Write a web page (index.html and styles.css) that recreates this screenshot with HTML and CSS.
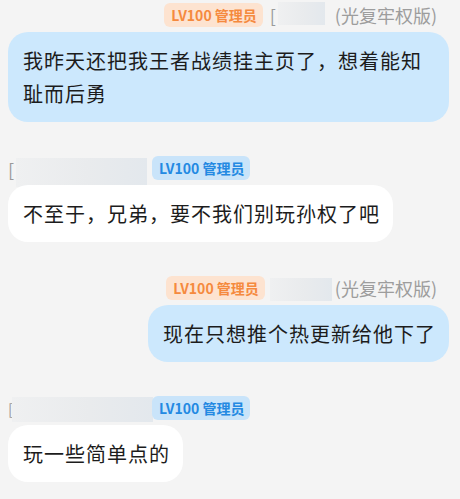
FILE: index.html
```html
<!DOCTYPE html>
<html lang="zh-CN">
<head>
<meta charset="utf-8">
<title>Chat</title>
<link rel="stylesheet" href="styles.css">
</head>
<body>
<div class="chat">
  <div class="msg msg-right">
    <div class="head">
      <span class="tag tag-orange">LV100 管理员</span>
      <span class="name name-r1"><span class="peek">[</span><span class="blur blur-r1"></span></span>
      <span class="suffix">(光复牢权版)</span>
    </div>
    <div class="bubble bubble-blue wide">我昨天还把我王者战绩挂主页了，想着能知耻而后勇</div>
  </div>

  <div class="msg msg-left">
    <div class="head">
      <span class="name name-l"><span class="peek peek-l">[</span><span class="blur blur-l2"></span></span>
      <span class="tag tag-blue">LV100 管理员</span>
    </div>
    <div class="bubble bubble-white">不至于，兄弟，要不我们别玩孙权了吧</div>
  </div>

  <div class="msg msg-right">
    <div class="head">
      <span class="tag tag-orange">LV100 管理员</span>
      <span class="name name-r3"><span class="blur blur-r3"></span></span>
      <span class="suffix">(光复牢权版)</span>
    </div>
    <div class="bubble bubble-blue">现在只想推个热更新给他下了</div>
  </div>

  <div class="msg msg-left">
    <div class="head">
      <span class="name name-l"><span class="peek peek-l4">[</span><span class="blur blur-l4"></span></span>
      <span class="tag tag-blue">LV100 管理员</span>
    </div>
    <div class="bubble bubble-white">玩一些简单点的</div>
  </div>
</div>
</body>
</html>
```

FILE: styles.css
```css
* { box-sizing: border-box; }

html, body {
  margin: 0;
  padding: 0;
  background: #f4f4f4;
}

body {
  font-family: "Noto Sans CJK SC", "Noto Sans", sans-serif;
  color: #1c1c1c;
}

.chat {
  display: flex;
  flex-direction: column;
  gap: 34px;
  padding: 3px 11px 0 8px;
}

.msg {
  display: flex;
  flex-direction: column;
  gap: 5px;
}

.msg-right { align-items: flex-end; }
.msg-left { align-items: flex-start; }

.head {
  display: flex;
  align-items: flex-start;
  height: 24px;
}

.msg-right .head { padding-right: 12px; }

.tag {
  display: inline-block;
  height: 24px;
  line-height: 24px;
  padding: 0 6px 0 7px;
  border-radius: 6px;
  font-size: 14px;
  font-weight: 700;
  white-space: nowrap;
}

.tag-orange {
  background: #fde3d0;
  color: #f58a3e;
}

.tag-blue {
  background: #c9e4fa;
  color: #2389e2;
}

.name {
  display: flex;
  align-items: flex-start;
  overflow: visible;
}

.name-r1 { width: 62px; margin-left: 7px; }
.name-r3 { width: 62px; margin-left: 5px; }
.name-l { width: 143px; margin-right: 1px; }

.peek {
  display: inline-block;
  font-size: 18px;
  line-height: 24px;
  color: #9a9a9a;
  width: 8px;
  flex: none;
}

.peek-l { width: 8px; margin-top: 1px; }
.peek-l4 { width: 4px; margin-top: 1px; font-size: 15px; }

.blur {
  display: block;
  flex: none;
  background: linear-gradient(90deg, #eff0f1 0%, #e9ebed 55%, #e3e8ed 100%);
}

.blur-r1 { width: 47px; height: 23px; margin-top: -1px; }
.blur-r3 { width: 62px; height: 23px; margin-top: 2px; }
.blur-l2 { width: 131px; height: 29px; margin-top: 2px; }
.blur-l4 { width: 141px; height: 25px; margin-top: 1px; }

.suffix {
  margin-left: 3px;
  font-size: 18px;
  line-height: 24px;
  color: #9d9d9d;
  white-space: nowrap;
}

.bubble {
  border-radius: 20px;
  padding: 12px 13px 12px 15px;
  font-size: 20px;
  letter-spacing: 1px;
  line-height: 33px;
  max-width: 441px;
}

.bubble.wide { width: 441px; }

.bubble-blue { background: #cce8fd; }
.bubble-white { background: #ffffff; }
```
